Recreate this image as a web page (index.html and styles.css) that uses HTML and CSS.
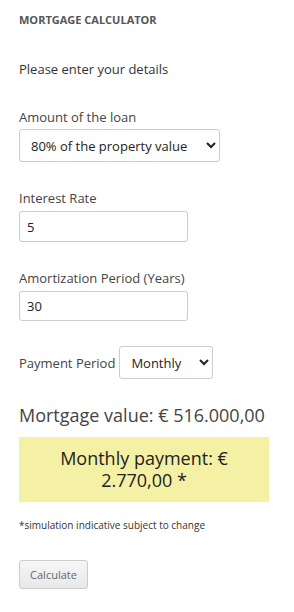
FILE: index.html
```html
<!DOCTYPE html>
<html lang="en">
<head>
   <meta charset="UTF-8">
   <meta name="viewport" content="width=device-width, initial-scale=1">
   <link rel="stylesheet" href="styles.css">
   <title>Mortgage Calculator</title>
</head>
<body>
   <div class="calc">
      <h2 class="titulo">Mortgage Calculator</h2>

      <p class="intro">Please enter your details</p>

      <div class="campo">
         <label for="amount">Amount of the loan</label>
         <select id="amount" class="sel-amount">
            <option>80% of the property value</option>
         </select>
      </div>

      <div class="campo taxa">
         <label for="rate">Interest Rate</label>
         <input type="text" id="rate" value="5">
      </div>

      <div class="campo prazo">
         <label for="years">Amortization Period (Years)</label>
         <input type="text" id="years" value="30">
      </div>

      <div class="campo inline">
         <label for="period">Payment Period</label>
         <select id="period" class="sel-period">
            <option>Monthly</option>
         </select>
      </div>

      <div class="valor">Mortgage value: € 516.000,00</div>

      <div class="pagamento">Monthly payment: € 2.770,00 *</div>

      <p class="nota">*simulation indicative subject to change</p>

      <button class="botao">Calculate</button>
   </div>
</body>
</html>
```

FILE: styles.css
```css
* {
   margin:0;
   padding:0;
   box-sizing:border-box;
   font-family:"Open Sans", sans-serif;
}

body {
   background:#fff;
   color:#444;
}

.calc {
   padding:13px 19px 0 19px;
   width:294px;
}

.titulo {
   font-size:11px;
   font-weight:700;
   color:#555;
   text-transform:uppercase;
   line-height:14px;
}

.intro {
   font-size:13px;
   line-height:18px;
   color:#333;
   margin-top:33px;
}

.campo {
   margin-top:30px;
}

.campo label {
   display:block;
   font-size:13px;
   line-height:18px;
   color:#444;
   margin-bottom:3px;
}

.campo.taxa, .campo.prazo {
   margin-top:27px;
}

.campo.taxa label, .campo.prazo label {
   margin-bottom:4px;
}

select, input {
   font-size:13px;
   color:#222;
   border:1px solid #ccc;
   border-radius:3px;
   background:#fff;
}

.sel-amount {
   width:201px;
   height:33px;
   padding:0 6px 0 7px;
}

input {
   display:block;
   width:169px;
   height:31px;
   padding:0 7px;
   outline:0;
}

.campo.prazo input {
   height:30px;
}

.campo.inline {
   display:flex;
   align-items:center;
   gap:4px;
   margin-top:25px;
}

.campo.inline label {
   margin:0;
}

.sel-period {
   width:94px;
   height:33px;
   padding:0 6px 0 7px;
}

.valor {
   font-size:18px;
   line-height:24px;
   color:#444;
   margin-top:24px;
}

.pagamento {
   background:#f5f1a4;
   width:250px;
   margin-top:10px;
   padding:10px 20px 11px;
   text-align:center;
   font-size:18px;
   line-height:22px;
   color:#222;
}

.nota {
   font-size:10px;
   line-height:14px;
   color:#333;
   margin-top:16px;
}

.botao {
   margin-top:28px;
   width:69px;
   height:29px;
   font-size:11px;
   color:#666;
   border:1px solid #ccc;
   border-radius:3px;
   background:linear-gradient(#f6f6f6, #e8e8e8);
   box-shadow:0 1px 1px rgba(0,0,0,.08);
}
```
